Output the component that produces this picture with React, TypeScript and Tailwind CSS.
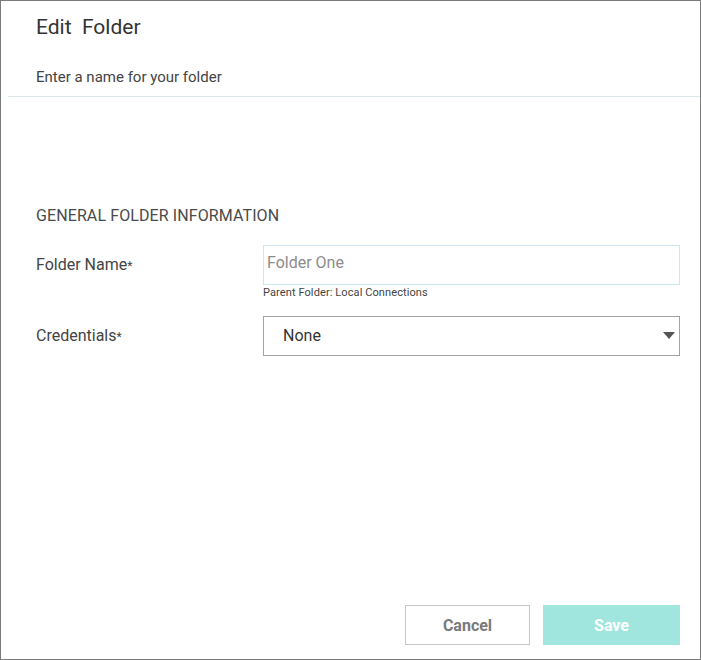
import React from 'react';

const font = { fontFamily: 'Roboto, "Liberation Sans", sans-serif' };

export default function App() {
  return (
    <div
      className="w-[701px] h-[660px] bg-white border border-[#7b7b7b] flex flex-col text-[#444]"
      style={font}
    >
      {/* Header */}
      <div className="pl-[35px] pt-[14px]">
        <h1 className="text-[21px] leading-6 text-[#333] whitespace-pre">Edit  Folder</h1>
        <p className="mt-[28px] text-[15px] leading-5 text-[#444]">Enter a name for your folder</p>
      </div>
      <div className="ml-[7px] mt-[9px] h-px bg-[#dbe9ec]" />

      {/* Form */}
      <div className="pl-[35px] pr-[20px] flex-1 flex flex-col">
        <h2 className="mt-[109px] text-[16px] leading-5 uppercase tracking-[0.1px] text-[#4a4a4a]">General Folder Information</h2>

        <div className="mt-[19px] flex">
          <label className="w-[227px] pt-[10px] text-[16px] leading-5 text-[#444]">
            Folder Name<span className="text-[12px]">*</span>
          </label>
          <div className="flex-1">
            <input
              placeholder="Folder One"
              className="w-full h-[40px] border border-[#cbe6ed] pl-[3px] pb-[5px] text-[16px] text-[#333] placeholder:text-[#8c8c8c] outline-none"
              style={font}
            />
            <div className="mt-[1px] text-[11px] leading-[14px] tracking-[0.1px] text-[#444]">Parent Folder: Local Connections</div>
          </div>
        </div>

        <div className="mt-[16px] flex">
          <label className="w-[227px] pt-[10px] text-[16px] leading-5 text-[#444]">
            Credentials<span className="text-[12px]">*</span>
          </label>
          <div className="flex-1 h-[40px] border border-[#a3a3a3] flex items-center pl-[19px] pr-[4px]">
            <span className="flex-1 text-[16px] text-[#333]">None</span>
            <svg width="12" height="8" viewBox="0 0 12 8">
              <path d="M0 0 L12 0 L6 7 Z" fill="#555" />
            </svg>
          </div>
        </div>

        <div className="mt-auto mb-[14px] flex justify-end gap-[13px]">
          <button className="w-[125px] h-[40px] pt-[2px] border border-[#c3c7ca] bg-white text-[16px] font-bold text-[#7a7a7a]">
            Cancel
          </button>
          <button className="w-[137px] h-[40px] pt-[2px] bg-[#a1e6de] text-[16px] font-bold text-white">
            Save
          </button>
        </div>
      </div>
    </div>
  );
}
